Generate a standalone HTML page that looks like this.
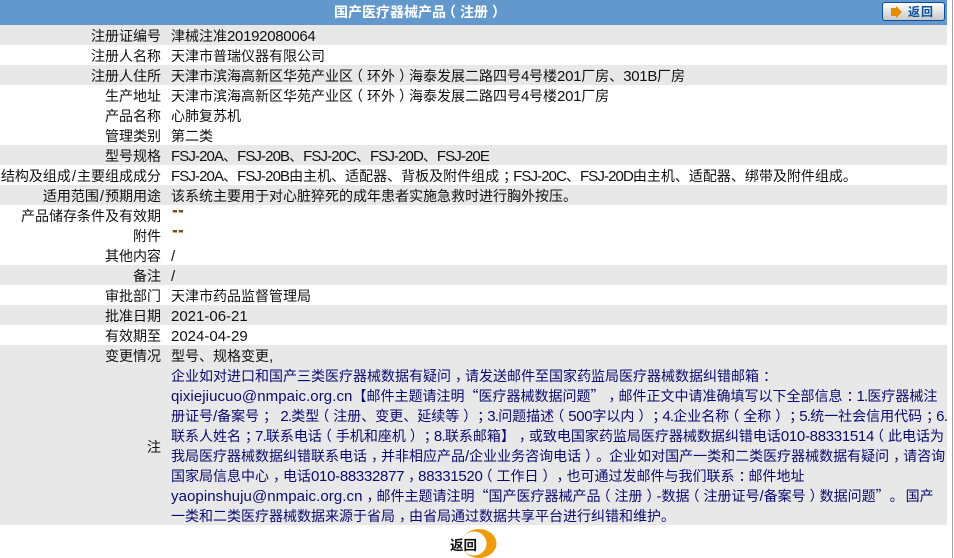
<!DOCTYPE html>
<html lang="zh-CN"><head><meta charset="utf-8"><title>国产医疗器械产品（注册）</title>
<style>
html,body{margin:0;padding:0;background:#fff}
body{position:relative;width:954px;height:558px;overflow:hidden;font:14px/20px "Noto Sans CJK SC","Liberation Sans",sans-serif;color:#111;text-spacing-trim:space-all}
.bar{position:absolute;left:0;width:947px;background:#e8e8e8}
.l,.v{position:absolute;height:20px;white-space:nowrap;margin-top:1px}
.l{left:0;width:161px;text-align:right}
.l u{margin:0 1px}
.v{left:171px}
.n{color:#0a0a70}
.q{left:172px;color:#7a4a10;font:700 10px/20px "Liberation Sans",sans-serif;letter-spacing:1.3px;margin-top:0;text-shadow:1px 0 0 #7a4a10}
u{text-decoration:none;font:15px/20px "Liberation Sans",sans-serif}
u.c{letter-spacing:-.9px}
u.p{letter-spacing:-.3px}
u.d{letter-spacing:-.8px}
u.m{letter-spacing:.08px}
s{text-decoration:none;position:relative;left:4px}
s.o{left:1px}
em{font-style:normal;position:relative;left:-4px}
</style></head><body>
<div style="position:absolute;left:0;top:0;width:947px;height:25px;background:#6398cc"></div>
<div style="position:absolute;left:334px;top:2px;color:#fff;font-weight:700;white-space:nowrap">国产医疗器械产品<em>（</em>注册<s>）</s></div>
<div style="position:absolute;left:882px;top:2px;width:61px;height:17px;border:1px solid #0b4f9c;border-radius:3px;background:linear-gradient(#fff,#c8c8c8)"></div>
<svg style="position:absolute;left:890px;top:5px" width="14" height="14" viewBox="0 0 14 14"><path d="M1 3H6V1L12 7L6 13V11H1Z" fill="#ea8a00"/></svg>
<div style="position:absolute;left:908px;top:2px;font-size:12px;line-height:20px;font-weight:700;color:#0b4f9c;letter-spacing:1px;white-space:nowrap">返回</div>

<div class="bar" style="top:25px;height:20px"></div>
<div class="bar" style="top:65px;height:20px"></div>
<div class="bar" style="top:145px;height:20px"></div>
<div class="bar" style="top:185px;height:20px"></div>
<div class="bar" style="top:265px;height:20px"></div>
<div class="bar" style="top:305px;height:20px"></div>
<div class="bar" style="top:345px;height:180px"></div>

<div class="l" style="top:25px">注册证编号</div><div class="v" style="top:25px">津械注准<u class="p">20192080064</u></div>
<div class="l" style="top:45px">注册人名称</div><div class="v" style="top:45px">天津市普瑞仪器有限公司</div>
<div class="l" style="top:65px">注册人住所</div><div class="v" style="top:65px">天津市滨海高新区华苑产业区<em>（</em>环外<s>）</s>海泰发展二路四号<u class="p">4</u>号楼<u class="p">201</u>厂房、<u class="p">301B</u>厂房</div>
<div class="l" style="top:85px">生产地址</div><div class="v" style="top:85px">天津市滨海高新区华苑产业区<em>（</em>环外<s>）</s>海泰发展二路四号<u class="p">4</u>号楼<u class="p">201</u>厂房</div>
<div class="l" style="top:105px">产品名称</div><div class="v" style="top:105px">心肺复苏机</div>
<div class="l" style="top:125px">管理类别</div><div class="v" style="top:125px">第二类</div>
<div class="l" style="top:145px">型号规格</div><div class="v" style="top:145px"><u class="c">FSJ-20A</u>、<u class="c">FSJ-20B</u>、<u class="c">FSJ-20C</u>、<u class="c">FSJ-20D</u>、<u class="c">FSJ-20E</u></div>
<div class="l" style="top:165px">结构及组成<u>/</u>主要组成成分</div><div class="v" style="top:165px"><u class="c">FSJ-20A</u>、<u class="c">FSJ-20B</u>由主机、适配器、背板及附件组成<s>；</s><u class="c">FSJ-20C</u>、<u class="c">FSJ-20D</u>由主机、适配器、绑带及附件组成。</div>
<div class="l" style="top:185px">适用范围<u>/</u>预期用途</div><div class="v" style="top:185px">该系统主要用于对心脏猝死的成年患者实施急救时进行胸外按压。</div>
<div class="l" style="top:205px">产品储存条件及有效期</div><div class="v q" style="top:205px">""</div>
<div class="l" style="top:225px">附件</div><div class="v q" style="top:225px">""</div>
<div class="l" style="top:245px">其他内容</div><div class="v" style="top:245px"><u>/</u></div>
<div class="l" style="top:265px">备注</div><div class="v" style="top:265px"><u>/</u></div>
<div class="l" style="top:285px">审批部门</div><div class="v" style="top:285px">天津市药品监督管理局</div>
<div class="l" style="top:305px">批准日期</div><div class="v" style="top:305px"><u>2021-06-21</u></div>
<div class="l" style="top:325px">有效期至</div><div class="v" style="top:325px"><u>2024-04-29</u></div>
<div class="l" style="top:345px">变更情况</div><div class="v" style="top:345px">型号、规格变更<u>,</u></div>
<div class="l" style="top:436px">注</div>

<div class="v n" style="top:365px">企业如对进口和国产三类医疗器械数据有疑问<s>，</s>请发送邮件至国家药监局医疗器械数据纠错邮箱<s>：</s></div>
<div class="v n" style="top:385px"><u class="m">qixiejiucuo@nmpaic.org.cn</u>【邮件主题请注明“医疗器械数据问题”<s>，</s>邮件正文中请准确填写以下全部信息<s>：</s><u class="d">1.</u>医疗器械注</div>
<div class="v n" style="top:405px">册证号<u>/</u>备案号<s>；</s><u style="margin-left:3px"> </u><u class="d">2.</u>类型<em>（</em>注册、变更、延续等<s>）</s><s>；</s><u class="d">3.</u>问题描述<em>（</em><u class="p">500</u>字以内<s>）</s><s>；</s><u class="d">4.</u>企业名称<em>（</em>全称<s>）</s><s>；</s><u class="d">5.</u>统一社会信用代码<s>；</s><u class="d">6.</u></div>
<div class="v n" style="top:425px">联系人姓名<s>；</s><u class="d">7.</u>联系电话<em>（</em>手机和座机<s>）</s><s>；</s><u class="d">8.</u>联系邮箱】<s>，</s>或致电国家药监局医疗器械数据纠错电话<u class="p">010-88331514</u><em>（</em>此电话为</div>
<div class="v n" style="top:445px">我局医疗器械数据纠错联系电话<s>，</s>并非相应产品<u>/</u>企业业务咨询电话<s>）</s><s class="o">。</s>企业如对国产一类和二类医疗器械数据有疑问<s>，</s>请咨询</div>
<div class="v n" style="top:465px">国家局信息中心<s>，</s>电话<u class="p">010-88332877</u><s>，</s><u class="p">88331520</u><em>（</em>工作日<s>）</s><s>，</s>也可通过发邮件与我们联系<s>：</s>邮件地址</div>
<div class="v n" style="top:485px"><u class="m">yaopinshuju@nmpaic.org.cn</u><s>，</s>邮件主题请注明“国产医疗器械产品<em>（</em>注册<s>）</s><u>-</u>数据<em>（</em>注册证号<u>/</u>备案号<s>）</s>数据问题”<span style="margin-right:2px">。</span>国产</div>
<div class="v n" style="top:505px">一类和二类医疗器械数据来源于省局<s>，</s>由省局通过数据共享平台进行纠错和维护。</div>

<svg style="position:absolute;left:455px;top:525px" width="45" height="33" viewBox="0 0 45 33"><ellipse cx="24" cy="18.5" rx="17.5" ry="14.5" fill="#ec9c0c"/><ellipse cx="19" cy="18.5" rx="12.5" ry="12" fill="#fff"/></svg>
<div style="position:absolute;left:450px;top:534px;font-weight:700;color:#111;white-space:nowrap;font-size:13.5px">返回</div>

<div style="position:absolute;left:952px;top:0;width:1px;height:558px;background:#a0a0a0"></div>
</body></html>
